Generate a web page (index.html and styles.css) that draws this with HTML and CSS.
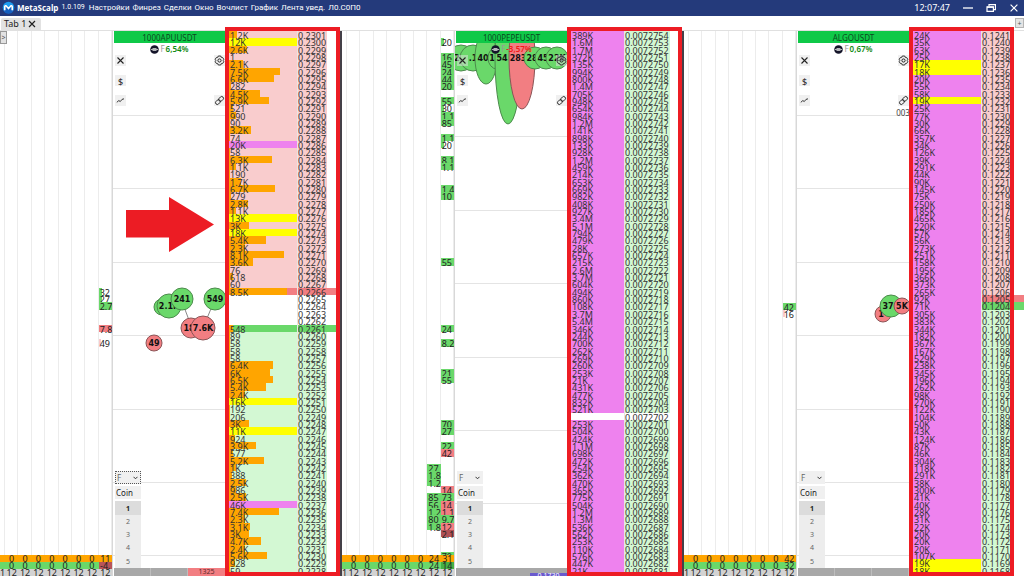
FILE: index.html
```html
<!DOCTYPE html>
<html lang="ru">
<head>
<meta charset="utf-8">
<title>MetaScalp</title>
<link rel="stylesheet" href="styles.css">
</head>
<body>
<div class="app">
  <header class="titlebar">
    <svg class="logo" viewBox="0 0 14 14"><circle cx="7" cy="7" r="6.2" fill="#1d9bf0"/><path d="M1.6 10.5 4.4 4l2.6 4 2.6-4 2.8 6.5A6.2 6.2 0 0 1 1.6 10.5z" fill="#1560c0"/><path d="M3 9.5V6.2Q3 4.6 4.4 5.2L7 8.2l2.6-3Q11 4.6 11 6.2v3.3" fill="none" stroke="#fff" stroke-width="1.7" stroke-linecap="round"/></svg>
    <strong class="brand">MetaScalp</strong>
    <span class="version">1.0.109</span>
    <nav class="menu">
      <button>Настройки</button><button>Финрез</button><button>Сделки</button><button>Окно</button><button>Вочлист</button><button>График</button><button>Лента увед.</button><button>Л0.С0П0</button>
    </nav>
    <time class="clock">12:07:47</time>
    <button class="win" aria-label="Свернуть"><svg viewBox="0 0 12 12"><path d="M1 6h10" stroke="#fff" stroke-width="1.3"/></svg></button>
    <button class="win" aria-label="Окно"><svg viewBox="0 0 12 12"><path d="M4 4V2.6h6.400v5H9" fill="none" stroke="#fff" stroke-width="1.2"/><path d="M2 4.800h6.400v4.600H2z" fill="none" stroke="#fff" stroke-width="1.2"/><path d="M2 5.200h6.400" stroke="#fff" stroke-width="1.4"/></svg></button>
    <button class="win" aria-label="Закрыть"><svg viewBox="0 0 12 12"><path d="M2.600 2.600l6.800 6.800M9.400 2.600 2.600 9.400" stroke="#fff" stroke-width="1.2"/></svg></button>
  </header>
  <div class="tabs">
    <div class="tab">Tab 1 <button class="tab-close" aria-label="Закрыть вкладку"><svg viewBox="0 0 8 8"><path d="M1 1l6 6M7 1 1 7" stroke="#222" stroke-width="1.2"/></svg></button></div>
    <button class="tab-add">+</button>
  </div>
  <main class="panels" id="panels">
    <button class="expand">&gt;</button>
    <svg class="arrow" viewBox="0 0 88 56"><path d="M0 13h43V0l45 27.500L43 55V40.500H0z" fill="#ec1c24"/></svg>
  </main>
</div>
<script src="app.js"></script>
</body>
</html>
```
FILE: styles.css
```css
* { box-sizing: border-box; }

body {
  margin: 0;
  background: #fff;
  color: #222;
  font-family: "Noto Sans", "Open Sans", sans-serif;
  font-size: 9px;
}

button, input, select {
  margin: 0;
  padding: 0;
  border: 0;
  border-radius: 0;
  background: none;
  color: inherit;
  font: inherit;
}

svg { display: block; }

.app {
  display: flex;
  flex-direction: column;
  height: 100vh;
  overflow: hidden;
}

/* title bar */
.titlebar {
  display: flex;
  align-items: center;
  flex: 0 0 16px;
  padding: 0 4px 1px 2px;
  background: #243a7b;
  color: #fff;
  font-family: Roboto, sans-serif;
  font-size: 8px;
  line-height: 15px;
  white-space: nowrap;
}
.logo { width: 13px; height: 13px; margin-right: 2px; }
.brand { margin-right: 3px; font-family: "Open Sans", sans-serif; }
.version { margin-right: 4px; font-size: 7px; }
.menu { display: flex; gap: 3px; }
.clock { margin-left: auto; margin-right: 12px; font-family: "Noto Sans", sans-serif; font-size: 9px; }
.win { width: 12px; height: 12px; margin-left: 11px; }
.win svg { width: 12px; height: 12px; }
.clock + .win { margin-left: 0; }

/* tabs */
.tabs {
  display: flex;
  justify-content: space-between;
  flex: 0 0 15px;
  padding-top: 2px;
  border-bottom: 1px solid #e0e0e0;
}
.tab {
  display: flex;
  align-items: center;
  gap: 2px;
  margin-left: 1px;
  padding: 0 5px 0 3px;
  border-radius: 2px 2px 0 0;
  background: #e2e2e2;
  line-height: 12px;
}
.tab-close svg { width: 8px; height: 8px; }
.tab-add {
  width: 9px;
  height: 10px;
  border: 1px solid #b5b5b5;
  background: #e4e4e4;
  color: #555;
  font-size: 7px;
  line-height: 7px;
}

/* panels */
.panels {
  position: relative;
  display: grid;
  grid-template-columns: 342fr 342fr 340fr;
  grid-template-rows: minmax(0, 1fr);
  flex: 1;
  min-height: 0;
}
.expand {
  position: absolute;
  left: 0;
  top: 0;
  width: 7px;
  height: 13px;
  border: 1px solid #999;
  background: #e2e2e2;
  color: #555;
  font-size: 7px;
  line-height: 10px;
}
.arrow {
  position: absolute;
  left: 126px;
  top: 166px;
  width: 88px;
  height: 56px;
}
.panel {
  display: grid;
  grid-template-columns: 113px 112px 1fr;
  grid-template-rows: minmax(0, 1fr);
  min-width: 0;
  min-height: 0;
}

/* clusters */
.clusters {
  position: relative;
  display: grid;
  grid-template-columns: 5px repeat(8, 1fr);
  grid-template-rows: repeat(74, minmax(0, 1fr));
  min-height: 0;
  padding-bottom: 2px;
  overflow: hidden;
  border-right: 1px solid #d8d8d8;
}
.lane { grid-row: 1 / -1; border-right: 1px solid #ececec; }
.hit {
  min-width: 0;
  min-height: 0;
  padding-left: 1px;
  overflow: clip visible;
  line-height: 9px;
}
.buy { background: #6ad86a; }
.sell { background: #f27e82; }
.deep { background: #b05055; }
.buy-part { background: linear-gradient(90deg, #6ad86a 3px, transparent 3px); }
.sell-part { background: linear-gradient(90deg, #fbc9cb 2px, transparent 2px); }
.totals {
  position: absolute;
  left: 0;
  right: 0;
  bottom: 0;
  display: grid;
  grid-template-columns: 5px repeat(8, 1fr);
  grid-auto-rows: 7px;
  line-height: 8px;
  text-align: center;
}
.totals span { min-width: 0; overflow: clip visible; }
.ask-sum { background: #ffa500; }
.bid-sum { background: #6ad86a; }
.bid-sum.strong { background: #45b045; }
.bid-sum.minus { background: #b8545a; }
.hour { background: #d3d3d3; }

/* chart column */
.chart {
  position: relative;
  display: flex;
  flex-direction: column;
  min-height: 0;
  padding-left: 1px;
}
.plot {
  position: absolute;
  left: 0;
  top: 0;
  width: 100%;
  height: 100%;
}
.plot text {
  font: bold 8px "DejaVu Sans", sans-serif;
  text-anchor: middle;
  fill: #111;
}
.plot .plain { font: 8px "Noto Sans", sans-serif; fill: #444; }
.level { stroke: #e4e4e4; stroke-width: 1; }
.link { stroke: #888; stroke-width: 1; }
.dot-buy { fill: #6ad86a; stroke: #4c8a4c; }
.dot-sell { fill: #f27e82; stroke: #8a5557; }
.symbol {
  position: relative;
  height: 12px;
  background: #0fc948;
  color: #0b4a1e;
  font-size: 8px;
  line-height: 13px;
  text-align: center;
}
.change {
  position: relative;
  display: flex;
  align-items: center;
  justify-content: center;
  gap: 1px;
  height: 12px;
  color: #999;
  font-size: 8px;
  line-height: 12px;
}
.change svg { width: 9px; height: 9px; }
.change b { font-weight: 600; }
.up { color: #128a12; }
.down { color: #f51818; }
.tools {
  position: relative;
  display: grid;
  grid-template-columns: 11px 11px;
  grid-auto-rows: 11px;
  justify-content: space-between;
  gap: 9px;
  padding-left: 1px;
}
.tool { background: rgba(225, 225, 225, 0.5); }
.tool svg { width: 11px; height: 11px; }
.tool svg path, .tool svg circle, .tool svg rect { fill: none; stroke: #222; }
.left { grid-column: 1; }
.right { grid-column: 2; }
.order {
  position: relative;
  display: flex;
  flex-direction: column;
  gap: 2px;
  width: 26px;
  margin-top: auto;
  margin-left: 1px;
  font-size: 8px;
}
.market {
  height: 13px;
  padding: 0 2px;
  appearance: none;
  background: #f0f0f0 url("data:image/svg+xml,%3Csvg xmlns='http://www.w3.org/2000/svg' width='5' height='4'%3E%3Cpath d='M.5 .8l2 2 2-2' fill='none' stroke='%23333'/%3E%3C/svg%3E") no-repeat right 3px center;
  color: #666;
}
.focused { outline: 1px dotted #555; outline-offset: -1px; }
.coin { width: 26px; height: 13px; padding: 0 1px; background: #f0f0f0; }
.sizes { display: grid; grid-template-rows: 14px 13px 13px 13px 14px; background: #ededed; }
.sizes button { color: #666; font-size: 7px; line-height: 13px; }
.sizes .on { background: #dcdcdc; color: #222; font-weight: bold; }
.strip {
  position: relative;
  display: grid;
  grid-template-columns: repeat(3, 1fr);
  height: 8px;
  background: #a8a8a8;
  color: #5c2a2c;
  font-size: 7px;
  line-height: 8px;
  text-align: center;
}
.strip span { border-right: 1px solid #bdbdbd; }
.strip .plainstrip { border: 0; }
.strip .hot { border: 0; background: #f27e82; }
.strip .tag {
  align-self: end;
  height: 3px;
  overflow: hidden;
  background: #6a5acd;
  color: #fff;
  line-height: 6px;
}

/* order book */
.book {
  position: relative;
  min-width: 0;
  padding: 0 0 2px 4px;
  border-right: 2px solid #444048;
}
.book.last { border-right: 0; }
.book::after {
  content: "";
  position: absolute;
  z-index: 2;
  inset: -4px 0 0 0;
  border: 4px solid #ed1c24;
}
.book.last::after { right: 10px; }
.ladder, .ladder tbody {
  display: grid;
  grid-template-rows: minmax(0, 1fr);
  height: 100%;
  min-height: 0;
}
.ladder tbody { grid-template-rows: repeat(74, minmax(0, 1fr)); }
.ladder tr {
  display: grid;
  grid-template-columns: 68px 30px 1fr;
  grid-template-rows: minmax(0, 1fr);
  min-height: 0;
}
.wide tr { grid-template-columns: 53px 46px 1fr; }
.ladder td { min-height: 0; padding: 0; line-height: 9px; white-space: nowrap; color: #333; }
.vol { position: relative; }
.bar { position: absolute; inset: 0 auto 0 0; background: #ffa500; }
.bar.big { background: #ff0; }
.bar.huge { background: #ee82ee; }
.ladder span { position: relative; z-index: 1; }
.vol span { padding-left: 1px; }
.ladder .price { border-left: 1px solid #e6e6e6; }
.ask .vol, .ask .price { background: #f9cccd; }
.bid .vol, .bid .price { background: #d3f8d3; }
.best-ask, .best-ask .price { background: #f27e82; }
.best-bid, .best-bid .price { background: #6ad86a; }
```
FILE: app.js
```js
const ROWS = 74;
const STEP = 543 / ROWS;

const icons = {
  close: '<path d="M2.500 2.500l6 6M8.500 2.500l-6 6" stroke-width="1.1"/>',
  gear: '<path d="M4.300 1h2.400l.5 1.300 1.500.3 1.100 1.700-.6 1.200.6 1.200-1.100 1.700-1.500.3-.5 1.300H4.300l-.5-1.300-1.500-.3-1.100-1.700.6-1.200-.6-1.200 1.100-1.700 1.500-.3z" stroke-width=".9"/><circle cx="5.500" cy="5.500" r="1.600"/>',
  trend: '<path d="M1.800 7.300l2-1.700 1.500.9L7 4.400l2-.6" stroke-width=".9"/>',
  link: '<g transform="rotate(-45 5.500 5.500)"><rect x=".6" y="3.700" width="5.400" height="3.600" rx="1.800" stroke-width=".9"/><rect x="5" y="3.700" width="5.400" height="3.600" rx="1.800" stroke-width=".9"/></g>'
};
const icon = name => `<svg viewBox="0 0 11 11">${icons[name]}</svg>`;

const panels = [
  {
    symbol: '1000APUUSDT', change: '6,54%', dir: 'up', start: 2301, prefix: '0.', levelStart: 85,
    spread: [36, 39], bestAsk: 35, bestBid: 40, focused: true,
    vols: '1.2K 12K 2.6K 1 2.1K 7.5K 6.6K 282 4.5K 5.9K 521 990 90 3.2K 74 20K 58 6.3K 1.1K 190 1.7K 6.7K 279 2.8K 1.1K 13K 3K 18K 5.4K 2.3K 8.1K 3.6K 76 618 60 8.5K - - - - 548 89 58 58 58 6.4K 6K 6.5K 5.4K 2.4K 16K 192 206 3K 11K 924 3.9K 577 5.2K 1K 388 2.5K 986 2.5K 46K 7.4K 2.3K 3.1K 3K 4.7K 2.4K 5.6K 928 59',
    hits: [[8, 35, '32', 'buy-part'], [8, 36, '27', 'buy-part'], [8, 37, '2.7', 'buy'], [8, 40, '7.8', 'sell'], [8, 42, '49', 'sell-part']],
    sums: [['0', '0', '0', '0', '0', '0', '0', '11'], ['0', '0', '0', '0', '0', '0', '0', '-4.']], mark: 'minus',
    links: [[68, 268, 79, 297], [102, 268, 90, 297]],
    dots: [[49, 276, 8, 8, 'buy', ''], [56, 275, 12, 12, 'buy', '2.1K'], [69, 268, 11, 11, 'buy', '241'], [102, 268, 11, 11, 'buy', '549'], [78, 297, 10, 10, 'sell', '18', 76], [90, 297, 12, 12, 'sell', '7.6K'], [41, 312, 8, 8, 'sell', '49']],
    strip: '<span></span><span></span><span class="hot">1325</span>'
  },
  {
    symbol: '1000PEPEUSDT', change: '-3,57%', dir: 'down', start: 72754, prefix: '0.00', levelStart: 33, wide: true,
    spread: [52, 52], bestAsk: -1, bestBid: -1, allBid: true,
    vols: '389K 1.6M 1.7M 372K 135K 994K 800K 1.4M 705K 948K 654K 984K 1.2M 141K 898K 133K 928K 1.2M 459K 214K 653K 669K 982K 408K 927K 3.4M 5.1M 794K 479K 28K 657K 215K 2.6M 3.7M 604K 494K 860K 108K 3.7M 5.4M 346K 244K 700K 262K 269K 260K 253K 21K 431K 477K 832K 521K - 253K 504K 424K 1.1M 698K 472K 254K 362K 470K 365K 775K 504K 1.2M 1.3M 536K 562K 253K 110K 576K 447K 21K',
    hits: [[8, 1, '20', 'buy-part'], [8, 3, '16', 'buy'], [8, 4, '45', 'buy'], [8, 5, '24', 'buy'], [8, 6, '44', 'buy'], [8, 7, '20', 'buy'], [8, 9, '55', 'buy'], [8, 10, '30', 'buy-part'], [8, 11, '1.1', 'buy'], [8, 12, '85', 'buy'], [8, 14, '1.1', 'buy'], [8, 15, '20', 'buy-part'], [8, 17, '8.1', 'buy'], [8, 18, '1.1', 'buy'], [8, 21, '1.4', 'buy'], [8, 22, '10', 'buy'], [8, 31, '55', 'buy'], [8, 40, '24', 'buy'], [8, 42, '8.2', 'buy'], [8, 46, '21', 'buy'], [8, 47, '55', 'buy'], [8, 53, '70', 'buy'], [8, 54, '27', 'buy'], [8, 56, '22', 'buy'], [8, 57, '42', 'sell'], [7, 59, '27', 'buy'], [7, 60, '1.8', 'buy'], [7, 61, '1.2', 'buy'], [8, 62, '14', 'sell'], [7, 63, '85', 'buy'], [8, 63, '73', 'buy'], [7, 64, '56', 'buy'], [8, 64, '14', 'sell'], [7, 65, '1.2', 'buy'], [8, 65, '1.1', 'sell'], [7, 66, '80', 'buy'], [8, 66, '9.7', 'buy'], [7, 67, '1.8', 'buy'], [8, 67, '12', 'sell'], [8, 68, '2.1', 'deep'], [8, 71, '70', 'buy']],
    sums: [['0', '0', '0', '0', '0', '0', '24', '31'], ['0', '0', '0', '0', '0', '0', '24', '14']], mark: 'strong',
    links: [],
    dots: [[6, 27, 13, 13, 'buy', '2.1'], [18, 27, 13, 13, 'buy', '.1'], [31, 27, 11, 26, 'buy', '40', 28], [42, 27, 9, 11, 'buy', '1', 37], [53, 27, 13, 66, 'buy', '54', 47], [67, 27, 13, 51, 'sell', '283', 63], [80, 27, 11, 11, 'buy', '28', 77], [91, 27, 11, 11, 'buy', '45', 88], [102, 27, 11, 11, 'buy', '22K']],
    strip: '<span class="plainstrip"></span><span class="plainstrip"></span><span class="plainstrip tag">0.1730</span>'
  },
  {
    symbol: 'ALGOUSDT', change: '0,67%', dir: 'up', start: 1241, prefix: '0.', levelStart: 85, last: true,
    spread: [99, 99], bestAsk: 36, bestBid: 37,
    vols: '24K 35K 63K 25K 17K 18K 20K 55K 58K 19K 25K 77K 30K 66K 357K 34K 126K 39K 291K 44K 90K 145K 75K 250K 185K 465K 220K 57K 56K 273K 251K 158K 195K 366K 373K 265K 92K 71K 305K 383K 344K 182K 367K 167K 529K 238K 345K 196K 262K 98K 270K 122K 104K 50K 43K 124K 87K 46K 304K 118K 291K 38K 300K 41K 40K 28K 31K 22K 20K 20K 20K 107K 19K 18K',
    hits: [[8, 37, '42', 'buy'], [8, 38, '16', 'sell-part']],
    sums: [['0', '0', '0', '0', '0', '0', '0', '42'], ['0', '0', '0', '0', '0', '0', '0', '32']], mark: '',
    links: [],
    dots: [[86, 283, 8, 8, 'sell', '1', 84], [94, 275, 11, 11, 'buy', '37', 91], [105, 275, 8, 8, 'sell', '5K']],
    note: '003',
    strip: '<span></span><span></span><span></span>'
  }
];

function amount(text) {
  const n = parseFloat(text);
  if (text.endsWith('M')) return n * 1e6;
  if (text.endsWith('K')) return n * 1e3;
  return n;
}

function clusters(p) {
  let html = '';
  for (let c = 1; c <= 9; c++) html += `<i class="lane" style="grid-column:${c}"></i>`;
  for (const [c, r, text, kind] of p.hits) {
    html += `<span class="hit ${kind}" style="grid-column:${c + 1};grid-row:${r + 1}">${text}</span>`;
  }
  html += '<div class="totals"><span class="ask-sum"></span>';
  html += p.sums[0].map(t => `<span class="ask-sum">${t}</span>`).join('');
  html += '<span class="bid-sum"></span>';
  html += p.sums[1].map((t, i) => `<span class="bid-sum ${i === 7 ? p.mark : ''}">${t}</span>`).join('');
  html += '<span class="hour">1</span>' + '<span class="hour">12</span>'.repeat(8) + '</div>';
  return `<section class="clusters">${html}</section>`;
}

function plot(p) {
  let html = '';
  for (let y = p.levelStart; y < 545; y += STEP * 10) {
    const line = Math.round(y) - 0.5;
    html += `<line class="level" x1="0" x2="100%" y1="${line}" y2="${line}"/>`;
  }
  for (const [a, b, c, d] of p.links) html += `<line class="link" x1="${a}" y1="${b}" x2="${c}" y2="${d}"/>`;
  for (const [x, y, rx, ry, side, text, labelX = x] of p.dots) {
    html += `<ellipse class="dot-${side}" cx="${x}" cy="${y}" rx="${rx}" ry="${ry}"/><text x="${labelX}" y="${y + 3}">${text}</text>`;
  }
  if (p.note) html += `<text class="plain" x="106" y="85">${p.note}</text>`;
  return `<svg class="plot">${html}</svg>`;
}

function chart(p, n) {
  return `<section class="chart">${plot(p)}
    <div class="symbol">${p.symbol}</div>
    <div class="change"><svg viewBox="0 0 9 9"><circle cx="4.500" cy="4.500" r="4.300" fill="#15152a"/><path d="M.8 4.500h7.400M2.500 3.500h4M2.500 5.500h4" stroke="#ddd" stroke-width=".8"/></svg>F <b class="${p.dir}">${p.change}</b></div>
    <div class="tools">
      <button class="tool left" aria-label="Закрыть">${icon('close')}</button>
      <button class="tool right" aria-label="Настройки">${icon('gear')}</button>
      <button class="tool left">$</button>
      <button class="tool left" aria-label="График">${icon('trend')}</button>
      <button class="tool right" aria-label="Связь">${icon('link')}</button>
    </div>
    <form class="order">
      <select class="market ${p.focused ? 'focused' : ''}" aria-label="Рынок ${n}"><option>F</option></select>
      <input class="coin" aria-label="Монета ${n}" value="Coin">
      <div class="sizes"><button type="button" class="on">1</button><button type="button">2</button><button type="button">3</button><button type="button">4</button><button type="button">5</button></div>
    </form>
    <div class="strip">${p.strip}</div>
  </section>`;
}

function book(p) {
  const rows = p.vols.split(' ').map((text, i) => {
    const inSpread = i >= p.spread[0] && i <= p.spread[1];
    let side = '';
    if (!inSpread) side = !p.allBid && i <= p.bestAsk ? 'ask' : 'bid';
    if (i === p.bestAsk) side = 'best-ask';
    if (i === p.bestBid) side = 'best-bid';
    const v = text === '-' ? 0 : amount(text);
    const size = v >= 20000 ? 'huge' : v >= 10000 ? 'big' : '';
    const bar = v ? `<i class="bar ${size}" style="width:${Math.min(100, v / 100)}%"></i><span>${text}</span>` : '';
    return `<tr class="${side}"><td class="vol">${bar}</td><td class="price"><span>${p.prefix}${p.start - i}</span></td></tr>`;
  }).join('');
  return `<section class="book ${p.last ? 'last' : ''}"><table class="ladder ${p.wide ? 'wide' : ''}"><tbody>${rows}</tbody></table></section>`;
}

document.getElementById('panels').insertAdjacentHTML('afterbegin',
  panels.map((p, i) => `<article class="panel">${clusters(p)}${chart(p, i + 1)}${book(p)}</article>`).join(''));
```
